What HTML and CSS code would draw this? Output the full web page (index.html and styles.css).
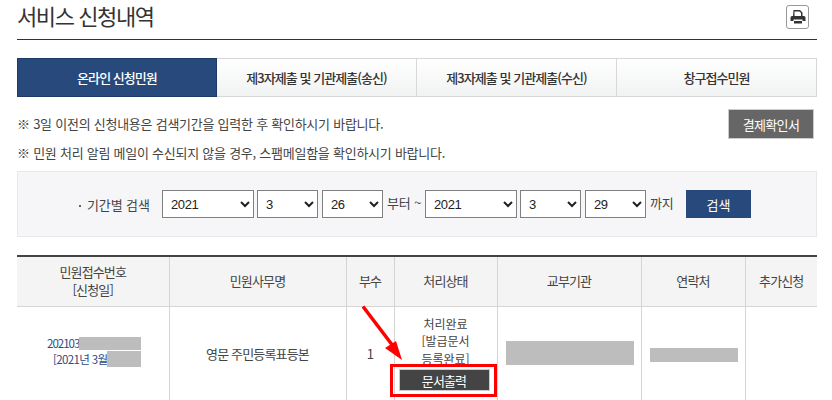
FILE: index.html
```html
<!DOCTYPE html>
<html lang="ko">
<head>
    <meta charset="UTF-8" />
    <meta name="viewport" content="width=device-width, initial-scale=1.0" />
    <title>서비스 신청내역</title>
    <link rel="stylesheet" href="styles.css">
</head>
<body>
    <div class="page">

        <!-- Title -->
        <div class="title-bar">
            <h1>서비스 신청내역</h1>
            <button class="print-btn" aria-label="인쇄">
                <svg width="16" height="16" viewBox="0 0 16 16">
                    <path d="M3.500 1h6.500l2.500 2.500v3.500h-1.500v-3l-1.500-1.500h-5v4.500h-1.500z" fill="#333"/>
                    <path d="M2 7h12a1.500 1.500 0 0 1 1.500 1.500v3.500h-3v-1.500h-9v1.500h-3v-3.500a1.500 1.500 0 0 1 1.500-1.500z" fill="#333"/>
                    <path d="M4 12h8v2.500h-8z" fill="#333"/>
                </svg>
            </button>
        </div>

        <!-- Tabs -->
        <div class="tabs">
            <a class="tab active">온라인 신청민원</a>
            <a class="tab">제3자제출 및 기관제출(송신)</a>
            <a class="tab">제3자제출 및 기관제출(수신)</a>
            <a class="tab">창구접수민원</a>
        </div>

        <!-- Notice -->
        <div class="notice">
            <div class="notice-text">
                <p>※ 3일 이전의 신청내용은 검색기간을 입력한 후 확인하시기 바랍니다.</p>
                <p>※ 민원 처리 알림 메일이 수신되지 않을 경우, 스팸메일함을 확인하시기 바랍니다.</p>
            </div>
            <button class="receipt-btn">결제확인서</button>
        </div>

        <!-- Search -->
        <div class="search">
            <span class="search-label">기간별 검색</span>
            <select class="sel-year"><option>2021</option></select>
            <select class="sel-small"><option>3</option></select>
            <select class="sel-small"><option>26</option></select>
            <span class="search-word">부터 ~</span>
            <select class="sel-year"><option>2021</option></select>
            <select class="sel-small"><option>3</option></select>
            <select class="sel-small"><option>29</option></select>
            <span class="search-word">까지</span>
            <button class="search-btn">검색</button>
        </div>

        <!-- List -->
        <div class="list-wrap">
            <table class="list">
                <colgroup>
                    <col class="c1"><col class="c2"><col class="c3"><col class="c4"><col class="c5"><col class="c6"><col class="c7">
                </colgroup>
                <thead>
                    <tr>
                        <th>민원접수번호<br>[신청일]</th>
                        <th>민원사무명</th>
                        <th>부수</th>
                        <th>처리상태</th>
                        <th>교부기관</th>
                        <th>연락처</th>
                        <th>추가신청</th>
                    </tr>
                </thead>
                <tbody>
                    <tr>
                        <td class="num">
                            <div class="num-line"><span class="link">202103</span><span class="hide hide-a"></span></div>
                            <div class="num-line second"><span class="link">[2021년 3월</span><span class="hide hide-b"></span></div>
                        </td>
                        <td>영문 주민등록표등본</td>
                        <td>1</td>
                        <td class="status">
                            처리완료<br>[발급문서<br>등록완료]
                            <button class="doc-btn">문서출력</button>
                        </td>
                        <td class="masked"><span class="hide hide-c"></span></td>
                        <td class="masked"><span class="hide hide-d"></span></td>
                        <td></td>
                    </tr>
                </tbody>
            </table>

            <!-- Annotation drawn over the table -->
            <svg class="arrow" width="60" height="70" viewBox="0 0 60 70">
                <path d="M3 1.500L33 41" stroke="#f00" stroke-width="3.500" fill="none"/>
                <path d="M42 55L36 36L25 43z" fill="#f00"/>
            </svg>
            <div class="red-box"></div>
        </div>
    </div>
</body>
</html>
```

FILE: styles.css
```css
* {
    margin: 0;
    padding: 0;
    box-sizing: border-box;
}

html, body {
    height: 100%;
    overflow: hidden;
    background: #fff;
    color: #333;
    font-family: "Noto Sans CJK KR", "Noto Sans", sans-serif;
    font-size: 13px;
}

.page {
    width: 800px;
    margin-left: 17px;
}

.title-bar {
    height: 40px;
    display: flex;
    justify-content: space-between;
    align-items: flex-start;
    border-bottom: 1px solid #333;
}

.title-bar h1 {
    font-size: 22px;
    font-weight: 400;
    line-height: 31px;
    letter-spacing: -1.4px;
    color: #333;
}

.print-btn {
    width: 23px;
    height: 24px;
    margin: 5px 8px 0 0;
    background: #fff;
    border: 1px solid #999;
    border-radius: 3px;
    display: flex;
    justify-content: center;
    align-items: center;
}

.tabs {
    display: grid;
    grid-template-columns: repeat(4, 200px);
    margin-top: 18px;
    height: 39px;
}

.tab {
    display: flex;
    justify-content: center;
    align-items: center;
    border: 1px solid #d8d8d8;
    border-left: 0;
    background: linear-gradient(#fff, #f1f2f2);
    font-weight: 500;
    letter-spacing: -0.95px;
    color: #333;
}

.tab:last-child {
    border-right: 1px solid #d8d8d8;
}

.tab.active {
    background: #28497b;
    border: 1px solid #1c3a66;
    color: #fff;
}

.notice {
    display: flex;
    justify-content: space-between;
    align-items: flex-start;
    height: 74px;
    padding-top: 12px;
}

.notice-text p {
    height: 29px;
    line-height: 30px;
    letter-spacing: -0.25px;
    color: #444;
}

.receipt-btn {
    width: 86px;
    height: 30px;
    margin-right: 3px;
    background: #666;
    border: 1px solid #ccc;
    color: #fff;
    font-family: inherit;
    font-size: 13px;
    letter-spacing: -0.7px;
}

.search {
    height: 66px;
    display: flex;
    align-items: center;
    padding-left: 61px;
    background: #f6f6f8;
    border: 1px solid #e8e8ea;
}

.search-label {
    width: 83px;
    color: #444;
    letter-spacing: -0.1px;
}

.search-label::before {
    content: "";
    display: inline-block;
    width: 2px;
    height: 2px;
    margin: 0 6px 3px 0;
    background: #666;
}

.search select {
    height: 28px;
    margin-right: 3px;
    padding-left: 4px;
    border: 1px solid #808080;
    background: #fff;
    color: #222;
    font-family: "Liberation Sans", sans-serif;
    font-size: 13px;
    letter-spacing: -0.4px;
}

.sel-year {
    width: 92px;
}

.sel-small {
    width: 61px;
}

.search .sel-small + .sel-small {
    margin-left: 1px;
}

.search-word {
    margin-bottom: 4px;
    padding-left: 1px;
    color: #444;
    letter-spacing: -0.1px;
}

.search-word:nth-of-type(2) {
    width: 39px;
    flex: none;
}

.search-word:nth-of-type(3) {
    width: 37px;
    flex: none;
}

.search-btn {
    width: 65px;
    height: 28px;
    background: #28497b;
    border: 0;
    color: #fff;
    font-family: inherit;
    font-size: 13px;
}

.list-wrap {
    position: relative;
    margin-top: 18px;
}

.list {
    width: 800px;
    border-collapse: collapse;
    table-layout: fixed;
    border-top: 2px solid #444;
    color: #444;
    text-align: center;
}

.c1 { width: 152px; }
.c2 { width: 177px; }
.c3 { width: 48px; }
.c4 { width: 103px; }
.c5 { width: 144px; }
.c6 { width: 104px; }
.c7 { width: 72px; }

.list th {
    height: 50px;
    background: #f4f4f4;
    border-left: 1px solid #d4d4d4;
    border-bottom: 1px solid #d4d4d4;
    font-weight: 400;
    line-height: 18px;
    letter-spacing: -0.85px;
}

.list td {
    height: 94px;
    border-left: 1px solid #d4d4d4;
    letter-spacing: -0.85px;
}

.list th:first-child,
.list td:first-child {
    border-left: 0;
}

.list td.num {
    padding-bottom: 4px;
}

.num-line {
    display: flex;
    justify-content: flex-start;
    padding-left: 30px;
    height: 16px;
    align-items: center;
}

.num-line.second {
    padding-left: 36px;
}

.link {
    color: #2a4a80;
    font-size: 11.5px;
    letter-spacing: -0.65px;
}

.num-line:first-child .link {
    letter-spacing: -1px;
}

.hide {
    display: inline-block;
    background: #bdbdbd;
}

.masked {
    padding-left: 2px;
}

.hide-a { width: 62px; height: 13px; }
.hide-b { width: 34px; height: 16px; }
.hide-c { width: 128px; height: 24px; vertical-align: middle; }
.hide-d { width: 88px; height: 14px; vertical-align: middle; }

.list td.status {
    vertical-align: top;
    padding-top: 8px;
    font-size: 12px;
    line-height: 17.500px;
    letter-spacing: 0;
}

.doc-btn {
    display: block;
    width: 91px;
    height: 22px;
    margin: 2px 0 0 4px;
    background: #444;
    border: 1px solid #ccc;
    color: #fff;
    font-family: inherit;
    font-size: 13px;
    letter-spacing: -0.85px;
}

.arrow {
    position: absolute;
    left: 343px;
    top: 50px;
}

.red-box {
    position: absolute;
    left: 373px;
    top: 109px;
    width: 107px;
    height: 33px;
    border: 3px solid #f00;
}
```
